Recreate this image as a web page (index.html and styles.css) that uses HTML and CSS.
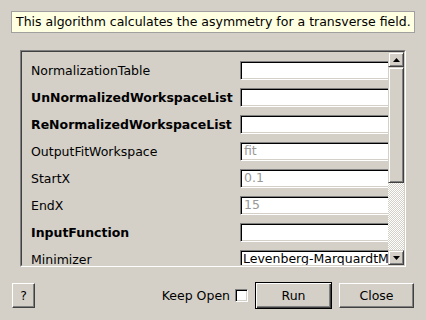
FILE: index.html
```html
<!DOCTYPE html>
<html lang="en">
<head>
    <meta charset="UTF-8">
    <title>AsymmetryCalc</title>
    <link rel="stylesheet" href="styles.css">
</head>
<body>
    <div class="desc">This algorithm calculates the asymmetry for a transverse field.</div>

    <!-- property list with its scrollbar -->
    <div class="panel">
        <div class="panel-in">
            <div class="props">
                <div class="row"><span class="name">NormalizationTable</span><span class="field"></span></div>
                <div class="row"><span class="name bold">UnNormalizedWorkspaceList</span><span class="field"></span></div>
                <div class="row"><span class="name bold">ReNormalizedWorkspaceList</span><span class="field"></span></div>
                <div class="row"><span class="name">OutputFitWorkspace</span><span class="field hint">fit</span></div>
                <div class="row"><span class="name">StartX</span><span class="field hint">0.1</span></div>
                <div class="row"><span class="name">EndX</span><span class="field hint">15</span></div>
                <div class="row"><span class="name bold">InputFunction</span><span class="field"></span></div>
                <div class="row"><span class="name">Minimizer</span><span class="field combo">Levenberg-MarquardtMD</span></div>
            </div>
            <div class="vscroll">
                <div class="sb-btn">
                    <svg width="7" height="4" viewBox="0 0 7 4"><path d="M0 4H7L3.5 0Z" fill="#000"/></svg>
                </div>
                <div class="sb-thumb"></div>
                <div class="sb-track"></div>
                <div class="sb-btn">
                    <svg width="7" height="4" viewBox="0 0 7 4"><path d="M0 0H7L3.5 4Z" fill="#000"/></svg>
                </div>
            </div>
        </div>
    </div>

    <div class="actions">
        <button class="btn help">?</button>
        <label class="keep">Keep Open <span class="check"></span></label>
        <button class="btn run">Run</button>
        <button class="btn close">Close</button>
    </div>
</body>
</html>
```

FILE: styles.css
```css
* { box-sizing: border-box; }
body { margin: 0; width: 426px; height: 320px; overflow: hidden; background: #d4d0c8; color: #000; font-family: "DejaVu Sans", sans-serif; font-size: 12.5px; }

.desc { margin: 11px 0 0 11px; width: 404px; height: 22px; padding-left: 4px; line-height: 20px; border: 1px solid #a0a0a0; background: #ffffe1; white-space: nowrap; }

/* sunken frame round the list */
.panel { margin: 17px 0 0 20px; width: 386px; height: 217px; border: 1px solid; border-color: #808080 #fff #fff #808080; }
.panel-in { display: flex; height: 100%; border: 1px solid; border-color: #404040 #d4d0c8 #d4d0c8 #404040; }
.props { flex: 1; overflow: hidden; display: flex; flex-direction: column; gap: 8px; padding: 9px 0 0 9px; }
.row { display: flex; align-items: center; height: 19px; flex-shrink: 0; }
.name { width: 209px; flex-shrink: 0; white-space: nowrap; }
.bold { font-weight: bold; }
.field { width: 170px; height: 19px; flex-shrink: 0; padding-left: 3px; line-height: 16px; white-space: nowrap; overflow: hidden; background: #fff; border: 1px solid; border-color: #808080 #fff #fff #808080; box-shadow: inset 1px 1px 0 #000, inset -1px -1px 0 #d4d0c8; }
.hint { color: #999; }
.combo { padding-left: 2px; }

/* scrollbar */
.vscroll { width: 16px; flex-shrink: 0; display: flex; flex-direction: column; }
.sb-btn, .sb-thumb { background: #d4d0c8; border: 1px solid; border-color: #d4d0c8 #404040 #404040 #d4d0c8; box-shadow: inset 1px 1px 0 #fff, inset -1px -1px 0 #808080; }
.sb-btn { height: 15px; display: flex; align-items: center; justify-content: center; }
.sb-btn svg { display: block; }
.sb-thumb { height: 116px; }
.sb-track { flex: 1; background: repeating-conic-gradient(#fff 0 25%, #d4d0c8 0 50%) 0 0 / 2px 2px; }

/* bottom buttons */
.actions { display: flex; align-items: center; height: 27px; margin: 15px 12px 0 12px; }
.btn { font-family: inherit; font-size: 12.5px; color: #000; background: #d4d0c8; padding: 0; cursor: pointer; border: 1px solid; border-color: #fff #404040 #404040 #fff; box-shadow: inset -1px -1px 0 #808080; }
.help { width: 23px; height: 25px; }
.keep { margin-left: auto; display: flex; align-items: center; gap: 5px; }
.check { width: 13px; height: 13px; background: #fff; border: 1px solid; border-color: #808080 #fff #fff #808080; box-shadow: inset 1px 1px 0 #000, inset -1px -1px 0 #d4d0c8; }
.run { width: 77px; height: 27px; margin-left: 7px; border-color: #000; box-shadow: inset 1px 1px 0 #fff, inset -1px -1px 0 #404040, inset -2px -2px 0 #808080; }
.close { width: 75px; height: 25px; margin-left: 7px; }
```
